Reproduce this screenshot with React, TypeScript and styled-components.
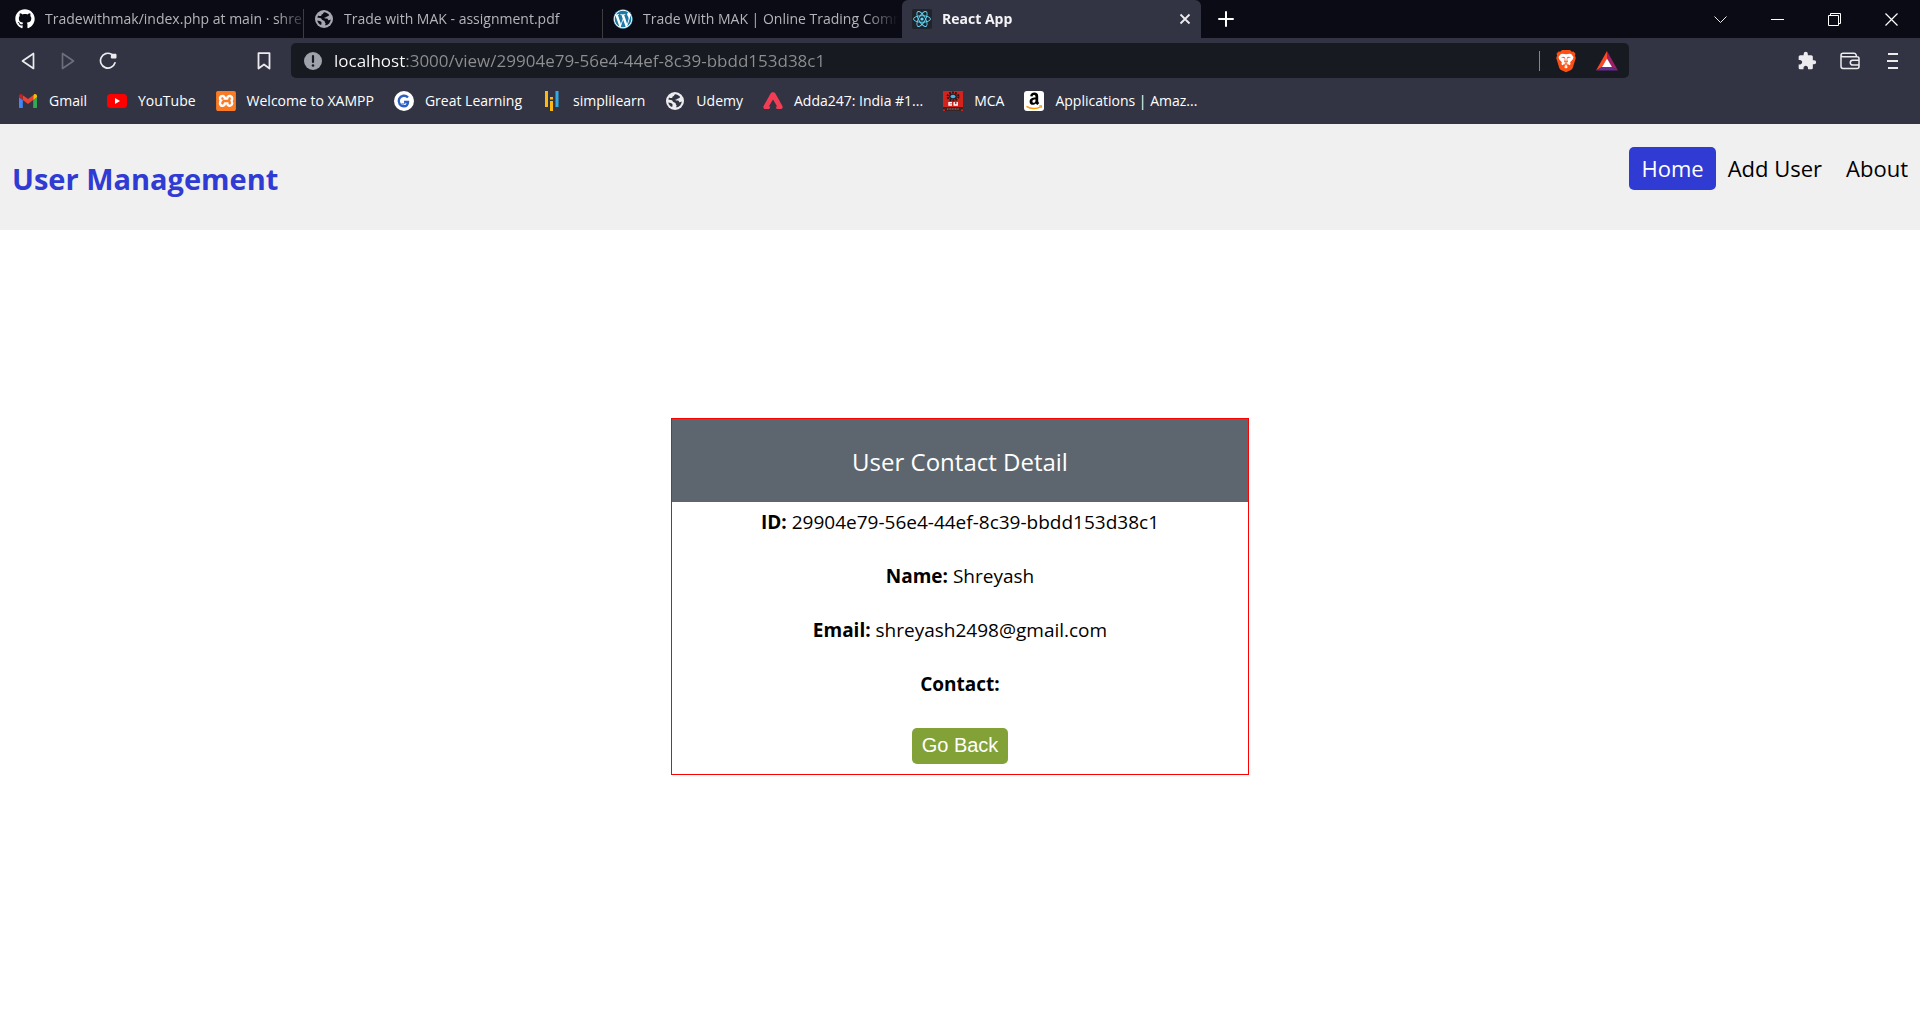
import React from "react";
import styled, { createGlobalStyle, css } from "styled-components";
import { FaGithub, FaWordpress } from "react-icons/fa";
import { SiXampp, SiBrave } from "react-icons/si";
import { MdExtension } from "react-icons/md";

const uiFont = '"Open Sans", "Noto Sans", sans-serif';

const GlobalStyle = createGlobalStyle`
  *, *::before, *::after { box-sizing: border-box; }
  body { margin: 0; background: #fff; font-family: ${uiFont}; }
  button, input { font-family: inherit; }
`;

const Window = styled.div`
  display: flex;
  flex-direction: column;
  min-height: 100vh;
`;

const plainButton = css`
  display: flex;
  align-items: center;
  justify-content: center;
  padding: 0;
  border: 0;
  background: none;
  color: #ececef;
  flex: none;
`;

/* ---------- tab strip ---------- */

const TabStrip = styled.div`
  display: flex;
  align-items: stretch;
  height: 38px;
  padding-left: 5px;
  background: #0b0b15;
`;

const TabList = styled.div`
  display: flex;
  flex: 0 1 1196px;
  min-width: 0;
`;

const Tab = styled.div<{ $active?: boolean; $divided?: boolean }>`
  display: flex;
  align-items: center;
  flex: 1 1 0;
  min-width: 0;
  padding: 0 10px;
  border-radius: 6px 6px 0 0;
  background: ${(p) => (p.$active ? "#323443" : "transparent")};
  &::after {
    content: "";
    display: ${(p) => (p.$divided ? "block" : "none")};
    align-self: flex-end;
    flex: none;
    width: 1px;
    height: 29px;
    margin-right: -10px;
    background: #3d3d40;
  }
`;

const TabButton = styled.button<{ $active?: boolean }>`
  ${plainButton}
  flex: 1;
  min-width: 0;
  gap: 10px;
  justify-content: flex-start;
  margin-right: ${(p) => (p.$active ? "0" : "-6px")};
  color: ${(p) => (p.$active ? "#f4f4f6" : "#b4b5ba")};
  font-size: 14px;
  line-height: 20px;
  font-weight: ${(p) => (p.$active ? 700 : 400)};
  svg { flex: none; }
`;

const TabTitle = styled.span`
  flex: 1;
  min-width: 0;
  overflow: hidden;
  white-space: nowrap;
  text-align: left;
  mask-image: linear-gradient(to right, #000 calc(100% - 32px), transparent);
`;

const CloseTab = styled.button`
  ${plainButton}
  width: 12px;
  height: 20px;
`;

const NewTab = styled.button`
  ${plainButton}
  width: 50px;
`;

const WindowControls = styled.div`
  display: flex;
  margin-left: auto;
`;

const WindowButton = styled.button`
  ${plainButton}
  width: 57px;
`;

/* ---------- toolbar ---------- */

const Toolbar = styled.div`
  display: flex;
  align-items: center;
  height: 45px;
  background: #323443;
`;

const NavButtons = styled.div`
  display: flex;
  flex: none;
  padding-left: 8px;
`;

const ToolButton = styled.button<{ $wide?: boolean }>`
  ${plainButton}
  width: ${(p) => (p.$wide ? "43px" : "40px")};
  height: 36px;
  &:disabled { color: #6c6e7a; }
`;

const BookmarkSlot = styled.div`
  display: flex;
  flex: none;
  margin-left: 116px;
  padding-right: 7px;
`;

const AddressBar = styled.div`
  display: flex;
  align-items: center;
  flex: 0 1 1338px;
  min-width: 0;
  height: 35px;
  padding: 0 2px 0 12px;
  border-radius: 5px;
  background: #171a21;
`;

const AddressInput = styled.input`
  flex: 1;
  min-width: 0;
  height: 30px;
  margin-left: 7px;
  padding: 0 4px;
  border: 0;
  outline: 0;
  color: #8e8f93;
  font-size: 17px;
  background: linear-gradient(to right, #fff 75px, #8e8f93 75px);
  background-clip: text;
  -webkit-background-clip: text;
  -webkit-text-fill-color: transparent;
`;

const Divider = styled.span`
  width: 1px;
  height: 20px;
  margin-right: 4px;
  background: #85868b;
`;

const ToolbarEnd = styled.div`
  display: flex;
  flex: none;
  margin-left: auto;
  padding-right: 6px;
`;

/* ---------- bookmarks ---------- */

const Bookmarks = styled.nav`
  display: flex;
  align-items: center;
  gap: 20px;
  height: 41px;
  padding: 0 18px 5px;
  background: #323443;
`;

const BookmarkLink = styled.a`
  display: flex;
  align-items: center;
  gap: 11px;
  color: #fff;
  font-size: 14px;
  line-height: 20px;
  white-space: nowrap;
  text-decoration: none;
  svg { flex: none; }
`;

/* ---------- page ---------- */

const Header = styled.header`
  display: flex;
  align-items: flex-start;
  justify-content: space-between;
  min-height: 106px;
  padding-left: 12px;
  background: #f0f0f0;
`;

const Brand = styled.h2`
  margin: 35px 0 0;
  color: #2f3bd3;
  font-size: 29px;
  line-height: 40px;
  font-weight: 700;
`;

const Menu = styled.nav`
  display: flex;
  margin-top: 23px;
`;

const MenuLink = styled.a<{ $active?: boolean }>`
  padding: 0 12px;
  border-radius: 5px;
  background: ${(p) => (p.$active ? "#303bd4" : "transparent")};
  color: ${(p) => (p.$active ? "#fff" : "#000")};
  font-size: 22px;
  line-height: 43px;
  text-decoration: none;
`;

const Main = styled.main`
  flex: 1;
  padding-top: 188px;
`;

const Card = styled.section`
  box-sizing: content-box;
  width: 30%;
  margin: 0 auto;
  border: 1px solid #f00;
  text-align: center;
`;

const CardHeader = styled.p`
  margin: 0;
  padding: 25px 0 23px;
  background: #5d666f;
  color: #fff;
  font-size: 24px;
  line-height: 35px;
`;

const CardBody = styled.div`
  display: flex;
  flex-direction: column;
  align-items: center;
  gap: 27px;
  padding: 7px 10px 10px;
`;

const Field = styled.div`
  color: #000;
  font-size: 19px;
  line-height: 27px;
  strong { font-weight: 700; }
`;

const BackButton = styled.button`
  height: 36px;
  margin-top: 3px;
  padding: 0 10px 2px;
  border: 0;
  border-radius: 5px;
  background: #82a136;
  color: #fff;
  font-family: "Liberation Sans", Arial, sans-serif;
  font-size: 20px;
  line-height: 34px;
`;

/* ---------- icons ---------- */

const Globe = ({ color, land }: { color: string; land: string }) => (
  <svg width="20" height="20" viewBox="0 0 20 20" aria-hidden="true">
    <circle cx="10" cy="10" r="9" fill={color} />
    <path
      d="M10.2 3.2c2 .1 4 1.300 5 2.900-.6 1.100-1.500 1.500-2.500 1.300-.4.900-1.500 1.200-2.300 1 0 1 .9 1.200 2 1.200 1.200 0 1.700.7 1.800 1.700.7.100 1.700-.2 2.600-.8-.3 3-2.400 5.400-5.200 6-.5-.6-.4-1.500.2-2.200-.8-.6-1.300-1.400-1.200-2.400-1.800-.4-2.900-1.300-3.500-2.700L3.300 8.500c.2-.8.500-1.500.9-2.100.9.800 2.200.9 3.100.3 0-1 .6-1.600 1.600-1.800.1-.7.500-1.300 1.300-1.700z"
      fill={land}
    />
    <path d="M3.300 11.400c1.800.1 3.500.5 4.100 1.700.5 1-.2 1.700-.1 3-2.200-.8-3.700-2.500-4-4.700z" fill={land} />
  </svg>
);

const ReactMark = () => (
  <svg width="20" height="20" viewBox="0 0 20 20" aria-hidden="true">
    <rect width="20" height="20" rx="2" fill="#20232a" />
    <g fill="none" stroke="#61dafb" strokeWidth="0.9">
      <ellipse cx="10" cy="10" rx="8.500" ry="3.300" />
      <ellipse cx="10" cy="10" rx="8.500" ry="3.300" transform="rotate(60 10 10)" />
      <ellipse cx="10" cy="10" rx="8.500" ry="3.300" transform="rotate(120 10 10)" />
    </g>
    <circle cx="10" cy="10" r="1.600" fill="#61dafb" />
  </svg>
);

const WordPressMark = () => (
  <svg width="20" height="20" viewBox="0 0 20 20" aria-hidden="true">
    <circle cx="10" cy="10" r="9.500" fill="#fff" />
    <FaWordpress size={20} color="#1b7aa6" />
  </svg>
);

const GmailMark = () => (
  <svg width="20" height="20" viewBox="0 0 20 20" aria-hidden="true">
    <path d="M2 17h2.800V9L1 6.200V16c0 .6.400 1 1 1z" fill="#4285f4" />
    <path d="M15.200 17H18c.6 0 1-.4 1-1V6.200L15.200 9z" fill="#34a853" />
    <path d="M15.200 4.800V9L19 6.200V5c0-1.700-1.900-2.500-3.100-1.500z" fill="#fbbc04" />
    <path d="M4.800 9V4.200L10 8.100l5.200-3.900V9L10 12.900z" fill="#ea4335" />
    <path d="M1 5v1.200L4.800 9V4.200l-.7-.7C2.900 2.500 1 3.300 1 5z" fill="#c5221f" />
  </svg>
);

const YouTubeMark = () => (
  <svg width="20" height="20" viewBox="0 0 20 20" aria-hidden="true">
    <rect y="3" width="20" height="14" rx="3.500" fill="#f00" />
    <path d="M8 7v6l5-3z" fill="#fff" />
  </svg>
);

const XamppMark = () => (
  <svg width="20" height="20" viewBox="0 0 20 20" aria-hidden="true">
    <rect x="2" y="2" width="16" height="16" fill="#fff" />
    <SiXampp size={20} color="#fb7a24" />
  </svg>
);

const GreatLearningMark = () => (
  <svg width="20" height="20" viewBox="0 0 20 20" aria-hidden="true">
    <circle cx="10" cy="10" r="10" fill="#fff" />
    <path d="M14 6.500A5.300 5.300 0 1 0 10 15.300c2.500 0 4-1.600 4-4.300h-4" fill="none" stroke="#2d5fc4" strokeWidth="2.400" />
    <path d="M7.500 12.600c1.400.9 3 .6 3.800-1.400" fill="none" stroke="#4b86e6" strokeWidth="1.200" />
  </svg>
);

const SimplilearnMark = () => (
  <svg width="20" height="20" viewBox="0 0 20 20" aria-hidden="true">
    <path d="M3 0h3v16H3zM8 6h3v2.500H8zM8 10h3v10H8z" fill="#fdb913" />
    <path d="M13.500 0h3v16h-3z" fill="#36a8e0" />
  </svg>
);

const AddaMark = () => (
  <svg width="20" height="20" viewBox="0 0 20 20" aria-hidden="true">
    <path
      d="M7.600 2.600c1-1.700 3.800-1.700 4.800 0l7 12.300c.8 1.500-.2 3.200-1.800 3.200h-3.900l-1-2.700h1.500L10 8.500l-4.200 6.900h1.500l-1 2.700H2.400c-1.600 0-2.600-1.700-1.800-3.200z"
      fill="#f23d55"
    />
  </svg>
);

const McaMark = () => (
  <svg width="20" height="20" viewBox="0 0 20 20" aria-hidden="true">
    <rect width="20" height="20" fill="#d3231d" />
    <ellipse cx="10" cy="5.500" rx="5.500" ry="4" fill="none" stroke="#2a1414" strokeWidth="2" strokeDasharray="1.800 1.200" />
    <ellipse cx="10" cy="5.500" rx="4" ry="2.900" fill="#20222c" />
    <ellipse cx="10" cy="5.500" rx="2.500" ry="1.700" fill="#4ab3e8" />
    <path d="M9 11.700H6v2.300h3M11.200 11v3h3v-3" fill="none" stroke="#fff" strokeWidth="1.400" />
    <path d="M0 16h20v2.500h-2V20H2v-1.500H0z" fill="#3c2424" />
    <path d="M4 18h12" stroke="#9a8080" strokeDasharray="1 0.600" />
  </svg>
);

const AmazonMark = () => (
  <svg width="20" height="20" viewBox="0 0 20 20" aria-hidden="true">
    <rect width="20" height="20" rx="3" fill="#fff" />
    <path
      d="M6.200 5.200C6.400 3 8 1.600 10.300 1.600c2.600 0 3.900 1.300 3.900 3.600v4.600c0 1 .3 1.500 1.100 2.300l-1.900 1.900c-.8-.5-1.200-1-1.600-1.600-2 2.300-6.200 1.900-6.200-1.700 0-3 2.400-4.200 5.900-4.200 0-1.700-.2-2.500-1.400-2.500-.9 0-1.400.5-1.600 1.500zm5.300 3.300c-2 0-3.100.6-3.100 2 0 1.900 3.100 1.700 3.100-1.100z"
      fill="#000"
    />
    <path d="M2.500 15.300c4.300 3 10.200 3 14.300.3" fill="none" stroke="#f90" strokeWidth="1.500" />
    <path d="M15.200 14.800l2.400-.2-.4 2.400" fill="none" stroke="#f90" />
  </svg>
);

const BraveMark = () => (
  <svg width="22" height="24" viewBox="0 0 22 24" aria-hidden="true">
    <path
      d="M7 1h8l1.800 1.800 1.700-.3 2 2.300-.6 1.700.9 2.600-3 9.600c-.3 1-1 1.700-1.800 2.300L11 23.200 6 21c-.8-.6-1.500-1.300-1.800-2.300l-3-9.600.9-2.600-.6-1.700 2-2.300 1.700.3z"
      fill="#fb4f14"
    />
    <path
      d="M7.500 4.700L11 5.200l3.500-.5 1.700.2 2.300 3-.6 2.300-2.800 3.100.5 1.600-.9 1.400-1.600-.7L11 17.300l-2.100-1.700-1.600.7-.9-1.400.5-1.600-2.800-3.100-.6-2.300 2.300-3z"
      fill="#fff"
    />
    <path
      d="M5.800 8.300l3.300.6.800 1-.8 3 1.900.9 1.900-.9-.8-3 .8-1 3.300-.6-2.600-.5-1.600.7-.4 3L11 13l-.6-1.500-.4-3-1.600-.7zM8 15.500l3-1.500 3 1.500-3 .2z"
      fill="#fb4f14"
    />
    <path d="M9 18l2-1.300 2 1.300-2 1.500z" fill="#fff" />
  </svg>
);

const BatMark = () => (
  <svg width="24" height="22" viewBox="0 0 24 22" aria-hidden="true">
    <path d="M12 1L1 20.500l6-3.500 5-8.500z" fill="#ff4724" />
    <path d="M12 1l11 19.500-6-3.500-5-8.500z" fill="#9e1f63" />
    <path d="M1 20.500h22L17 17H7z" fill="#662d91" />
    <path d="M12 8.500L7 17h10z" fill="#fff" />
  </svg>
);

const tabs = [
  { title: "Tradewithmak/index.php at main · shre", icon: <FaGithub size={20} color="#fff" /> },
  { title: "Trade with MAK - assignment.pdf", icon: <Globe color="#a5a8b3" land="#0b0b15" /> },
  { title: "Trade With MAK | Online Trading Comm", icon: <WordPressMark /> },
  { title: "React App", icon: <ReactMark />, active: true },
];

const bookmarks = [
  { label: "Gmail", icon: <GmailMark /> },
  { label: "YouTube", icon: <YouTubeMark /> },
  { label: "Welcome to XAMPP", icon: <XamppMark /> },
  { label: "Great Learning", icon: <GreatLearningMark /> },
  { label: "simplilearn", icon: <SimplilearnMark /> },
  { label: "Udemy", icon: <Globe color="#ececef" land="#323443" /> },
  { label: "Adda247: India #1...", icon: <AddaMark /> },
  { label: "MCA", icon: <McaMark /> },
  { label: "Applications | Amaz...", icon: <AmazonMark /> },
];

const userId = "29904e79-56e4-44ef-8c39-bbdd153d38c1";

export default function App() {
  return (
    <Window>
      <GlobalStyle />
      <TabStrip>
        <TabList role="tablist">
          {tabs.map((tab, i) => (
            <Tab key={tab.title} role="presentation" $active={tab.active} $divided={i < 2}>
              <TabButton role="tab" aria-selected={!!tab.active} $active={tab.active}>
                {tab.icon}
                <TabTitle>{tab.title}</TabTitle>
              </TabButton>
              {tab.active && (
                <CloseTab aria-label="Close tab">
                  <svg width="12" height="12" viewBox="0 0 12 12">
                    <path d="M1.500 1.500l9 9M10.500 1.500l-9 9" stroke="currentColor" strokeWidth="1.800" />
                  </svg>
                </CloseTab>
              )}
            </Tab>
          ))}
        </TabList>
        <NewTab aria-label="New tab">
          <svg width="16" height="16" viewBox="0 0 16 16">
            <path d="M8 1v14M1 8h14" stroke="#fff" strokeWidth="2" strokeLinecap="round" />
          </svg>
        </NewTab>
        <WindowControls>
          <WindowButton aria-label="Search tabs">
            <svg width="13" height="13" viewBox="0 0 13 13">
              <path d="M.5 3.500l6 6 6-6" fill="none" stroke="currentColor" />
            </svg>
          </WindowButton>
          <WindowButton aria-label="Minimize">
            <svg width="13" height="13" viewBox="0 0 13 13">
              <path d="M0 6.500h13" stroke="#fff" />
            </svg>
          </WindowButton>
          <WindowButton aria-label="Restore">
            <svg width="13" height="13" viewBox="0 0 13 13">
              <path d="M.5 2.500h10v10H.5zM2.500 2.500v-2h10v10h-2" fill="none" stroke="#fff" />
            </svg>
          </WindowButton>
          <WindowButton aria-label="Close window">
            <svg width="13" height="13" viewBox="0 0 13 13">
              <path d="M.5.5l12 12M12.500.5l-12 12" stroke="#fff" strokeWidth="1.200" />
            </svg>
          </WindowButton>
        </WindowControls>
      </TabStrip>

      <Toolbar>
        <NavButtons>
          <ToolButton aria-label="Back">
            <svg width="16" height="18" viewBox="0 0 16 18">
              <path d="M13.500 1.500v15L2.500 9z" fill="none" stroke="currentColor" strokeWidth="1.700" strokeLinejoin="round" />
            </svg>
          </ToolButton>
          <ToolButton aria-label="Forward" disabled>
            <svg width="16" height="18" viewBox="0 0 16 18">
              <path d="M2.500 1.500v15l11-7.500z" fill="none" stroke="currentColor" strokeWidth="1.700" strokeLinejoin="round" />
            </svg>
          </ToolButton>
          <ToolButton aria-label="Reload">
            <svg width="18" height="18" viewBox="0 0 18 18">
              <path d="M12.500 2.200A7.400 7.400 0 1 0 16 10.800" fill="none" stroke="currentColor" strokeWidth="1.700" strokeLinecap="round" />
              <path d="M12 2.800c.2-.8.6-1 1.300-1h3c.8 0 1.200.5 1.200 1.200v2.200c0 .8-.4 1.300-1.200 1.300h-3.500c-.8 0-1.100-.5-1-1.200z" fill="currentColor" />
            </svg>
          </ToolButton>
        </NavButtons>
        <BookmarkSlot>
          <ToolButton aria-label="Bookmark this page">
            <svg width="14" height="18" viewBox="0 0 14 18">
              <path d="M1.500 1.200h11v15.300L7 12.500l-5.500 4z" fill="none" stroke="currentColor" strokeWidth="1.800" strokeLinejoin="round" />
            </svg>
          </ToolButton>
        </BookmarkSlot>
        <AddressBar>
          <svg width="20" height="20" viewBox="0 0 20 20" aria-hidden="true">
            <circle cx="10" cy="10" r="9" fill="#9fa1ab" />
            <path d="M10 5v6" stroke="#171a21" strokeWidth="2.200" strokeLinecap="round" />
            <circle cx="10" cy="14.500" r="1.300" fill="#171a21" />
          </svg>
          <AddressInput aria-label="Address" defaultValue={`localhost:3000/view/${userId}`} spellCheck={false} />
          <Divider />
          <ToolButton aria-label="Brave Shields" $wide>
            <BraveMark />
          </ToolButton>
          <ToolButton aria-label="Brave Rewards">
            <BatMark />
          </ToolButton>
        </AddressBar>
        <ToolbarEnd>
          <ToolButton aria-label="Extensions" $wide>
            <MdExtension size={20} />
          </ToolButton>
          <ToolButton aria-label="Wallet" $wide>
            <svg width="20" height="18" viewBox="0 0 20 18">
              <g fill="none" stroke="currentColor" strokeWidth="1.500">
                <path d="M1 3.500v10.800C1 15.800 1.700 16.500 3 16.500h14c1.200 0 2-.7 2-2V6.700c0-1.200-.8-2-2-2H3c-1.300 0-2-.4-2-1.400 0-1.300.7-2 2-2h11c1.200 0 1.800.5 2.200 1.700l.3 1.700" />
                <path d="M19 8.300h-6.300a2.400 2.400 0 0 0 0 4.800H19" />
              </g>
            </svg>
          </ToolButton>
          <ToolButton aria-label="Menu" $wide>
            <svg width="12" height="18" viewBox="0 0 12 18">
              <path d="M1 2h10M0 9h11M1 16h10" stroke="currentColor" strokeWidth="2" />
            </svg>
          </ToolButton>
        </ToolbarEnd>
      </Toolbar>

      <Bookmarks aria-label="Bookmarks">
        {bookmarks.map((b) => (
          <BookmarkLink key={b.label} href="#">
            {b.icon}
            {b.label}
          </BookmarkLink>
        ))}
      </Bookmarks>

      <Header>
        <Brand>User Management</Brand>
        <Menu aria-label="Main">
          <MenuLink href="#" $active>Home</MenuLink>
          <MenuLink href="#">Add User</MenuLink>
          <MenuLink href="#">About</MenuLink>
        </Menu>
      </Header>

      <Main>
        <Card>
          <CardHeader>User Contact Detail</CardHeader>
          <CardBody>
            <Field><strong>ID:</strong> {userId}</Field>
            <Field><strong>Name:</strong> Shreyash</Field>
            <Field><strong>Email:</strong> shreyash2498@gmail.com</Field>
            <Field><strong>Contact:</strong></Field>
            <BackButton type="button">Go Back</BackButton>
          </CardBody>
        </Card>
      </Main>
    </Window>
  );
}
